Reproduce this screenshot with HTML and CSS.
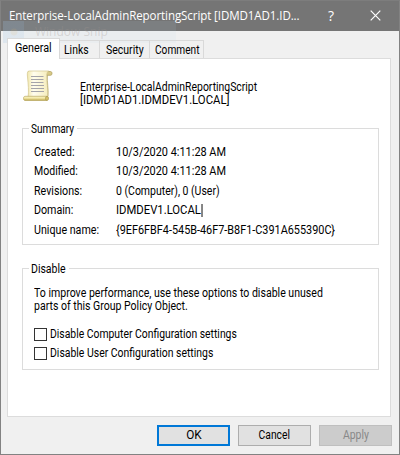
FILE: index.html
```html
<!DOCTYPE html>
<html lang="en">
<head>
<meta charset="utf-8">
<title>Group Policy Object Properties</title>
<link rel="stylesheet" href="styles.css">
</head>
<body>
<main class="window">
  <header class="titlebar">
    <h1 class="title">Enterprise-LocalAdminReportingScript [IDMD1AD1.ID...</h1>
    <span class="help">?</span>
    <svg class="close" width="11" height="11" viewBox="0 0 11 11"><path d="M.7.7l9.6 9.6M10.3.7L.7 10.3" fill="none" stroke="#fff" stroke-width="1.2"/></svg>
  </header>
  <div class="ghost"><span class="ghost-icon"></span><span class="ghost-text">Window Snip</span></div>
  <nav class="tabs">
    <span class="tab active"><span class="t-general">General</span></span>
    <span class="tab links"><span class="t-links">Links</span></span>
    <span class="tab security"><span class="t-security">Security</span></span>
    <span class="tab comment"><span class="t-comment">Comment</span></span>
  </nav>
  <section class="panel">
    <div class="object">
      <svg class="scroll" width="31" height="32" viewBox="0 0 31 32">
        <defs>
          <linearGradient id="paper" x1="0" y1="0" x2="1" y2="0"><stop offset="0" stop-color="#f1e7ac"/><stop offset=".3" stop-color="#fffdee"/><stop offset="1" stop-color="#f5ecbb"/></linearGradient>
          <linearGradient id="roll" x1="0" y1="0" x2="0" y2="1"><stop offset="0" stop-color="#fffbd0"/><stop offset=".5" stop-color="#eee19a"/><stop offset="1" stop-color="#b9a44f"/></linearGradient>
        </defs>
        <path d="M5 1.5h22.5c2 0 2 3.8 0 3.8H25z" fill="#d8c987" stroke="#a99a57" stroke-width=".7"/>
        <path d="M5.5 1h20c-1.6 1-1.8 3-1.8 6 0 7 1.800 13 1 21H5c1-7 .2-14-.5-21-.3-3-.4-5 1-6z" fill="url(#paper)" stroke="#d2c58c" stroke-width=".7"/>
        <path d="M24.500 5c-.7 7 1.200 14 .5 21" fill="none" stroke="#b4a668" stroke-width=".7"/>
        <path d="M8 6.500h12.500M8 9.500h12.500M8 12.500h12.500M8 15.500h13M8 18.500h13M8 21.500h13" stroke="#a5a4a9"/>
        <path d="M2 26.300h21.500c1.800 0 1.800 4.200 0 4.200H2c-2 0-2-4.200 0-4.200z" fill="url(#roll)" stroke="#b7a75f" stroke-width=".7"/>
        <ellipse cx="24" cy="28.400" rx="1.500" ry="2.100" fill="#d5c16a" stroke="#a39145" stroke-width=".6"/>
      </svg>
      <div class="object-name"><span class="n1">Enterprise-LocalAdminReportingScript</span><span class="n2">[IDMD1AD1.IDMDEV1.LOCAL]</span></div>
    </div>
    <section class="group summary">
      <h2 class="legend"><span class="t-summary">Summary</span></h2>
      <dl class="facts">
        <dt class="k1">Created:</dt><dd class="v1">10/3/2020 4:11:28 AM</dd>
        <dt class="k2">Modified:</dt><dd class="v1">10/3/2020 4:11:28 AM</dd>
        <dt class="k3">Revisions:</dt><dd class="v3">0 (Computer), 0 (User)</dd>
        <dt class="k4">Domain:</dt><dd class="v4"><span>IDMDEV1.LOCAL</span><i class="caret"></i></dd>
        <dt class="k5">Unique name:</dt><dd class="v5">{9EF6FBF4-545B-46F7-B8F1-C391A655390C}</dd>
      </dl>
    </section>
    <section class="group disable">
      <h2 class="legend legend-disable"><span class="t-disable">Disable</span></h2>
      <p class="hint"><span class="h1">To improve performance, use these options to disable unused</span><span class="h2">parts of this Group Policy Object.</span></p>
      <div class="check"><i class="box"></i><span class="c1">Disable Computer Configuration settings</span></div>
      <div class="check"><i class="box"></i><span class="c2">Disable User Configuration settings</span></div>
    </section>
  </section>
  <footer class="buttons">
    <span class="button default"><span class="t-ok">OK</span></span>
    <span class="button"><span class="t-cancel">Cancel</span></span>
    <span class="button disabled"><span class="t-apply">Apply</span></span>
  </footer>
</main>
</body>
</html>
```
FILE: styles.css
```css
* { box-sizing: border-box; margin: 0; padding: 0; }
body { width: 400px; height: 455px; overflow: hidden; font: 12px/13px Roboto, "Liberation Sans", sans-serif; color: #000; }
h1, h2 { font: inherit; }
.window { position: relative; display: flex; flex-direction: column; width: 400px; height: 455px; border: 1px solid #828282; border-top-color: #7d7d7d; background: #f0f0f0; }
.titlebar { display: flex; align-items: center; flex: none; height: 30px; padding-left: 8px; background: #757575; color: #fff; white-space: nowrap; }
.title { width: 319px; font: 12px/16px "Open Sans", sans-serif; letter-spacing: -.1px; transform: scaleX(.963); transform-origin: left; }
.help { width: 42px; font: 14px/16px "Open Sans", sans-serif; }
.close { display: block; margin-top: -1px; }
.ghost { position: absolute; left: 2px; top: 20px; width: 173px; height: 22px; display: flex; align-items: center; background: rgba(190, 220, 240, .1); }
.ghost-icon { width: 21px; height: 22px; margin-right: 11px; background: radial-gradient(circle at 11px 11px, rgba(190, 185, 165, .25) 3px, rgba(150, 190, 230, .15) 4px); }
.ghost-text { font: 12px/16px "Open Sans", sans-serif; color: rgba(160, 150, 145, .3); }
.tabs { position: relative; z-index: 1; display: flex; align-items: flex-end; flex: none; height: 28px; margin: -1px 0 0 6px; }
.tab { height: 18px; padding-top: 3px; border-top: 1px solid #d9d9d9; border-right: 1px solid #d9d9d9; white-space: nowrap; }
.tab.active { width: 53px; height: 21px; margin-bottom: -1px; padding: 3px 0 0 7px; border-left: 1px solid #d9d9d9; background: #fff; }
.links { width: 40px; padding-left: 4px; }
.security { width: 50px; padding-left: 6px; }
.comment { width: 54px; padding-left: 5px; }
.panel { flex: none; width: 384px; height: 359px; margin-left: 6px; padding: 11px 11px 0 14px; border: 1px solid #dcdcdc; background: #fff; }
.object { display: flex; height: 58px; }
.scroll { display: block; margin: 0 0 0 1px; }
.object-name { display: flex; flex-direction: column; margin: 11px 0 0 25.500px; white-space: nowrap; }
.group { position: relative; width: 357px; border: 1px solid #dcdcdc; }
.summary { height: 117px; }
.disable { height: 102px; margin-top: 23px; }
.legend { position: absolute; left: 6px; top: -6px; width: 48px; height: 13px; padding-left: 2px; background: #fff; }
.legend-disable { width: 40px; }
.facts { display: grid; grid-template-columns: 82px 1fr; grid-template-rows: 19px 20px 19px 20px 19px; padding: 17px 0 0 11px; white-space: nowrap; }
.v4 { display: flex; }
.caret { width: 1px; height: 13px; margin-left: 1px; background: #000; }
.hint { display: flex; flex-direction: column; margin: 18px 0 0 11px; white-space: nowrap; }
.check { display: flex; align-items: center; height: 13px; margin: 6px 0 0 11px; white-space: nowrap; }
.hint + .check { margin-top: 15px; }
.box { width: 13px; height: 13px; margin-right: 3px; border: 1px solid #333; background: #fff; }
.buttons { display: flex; gap: 8px; margin: 8px 0 0 156px; }
.button { width: 73px; height: 21px; padding-top: 3px; border: 1px solid #adadad; background: #e1e1e1; text-align: center; }
.default { padding-top: 2px; border: 2px solid #0078d7; }
.disabled { border-color: #bfbfbf; background: #ccc; color: #888; }

/* Condensed dialog lettering */
.tab span, .object-name span, .legend span, .facts dt, .facts dd, .hint span, .check span, .button span { display: inline-block; transform: scaleX(var(--w, 1)); transform-origin: left; }
.facts .v4 { display: flex; }
.button span { transform-origin: center; }
.t-general { --w: .9; }
.t-links { --w: .87; }
.t-security { --w: .875; }
.t-comment { --w: .845; }
.n1 { --w: .868; }
.n2 { --w: .943; }
.t-summary { --w: .84; }
.t-disable { --w: .875; }
.k1 { --w: .91; }
.k2 { --w: .88; }
.k3 { --w: .89; }
.k4 { --w: .89; }
.k5 { --w: .89; }
.v1 { --w: .91; }
.v3 { --w: .873; }
.v4 { --w: .94; }
.facts .v4 span { transform: none; }
.v5 { --w: .905; }
.h1 { --w: .88; }
.h2 { --w: .877; }
.c1 { --w: .864; }
.c2 { --w: .87; }
.t-ok { --w: .98; }
.t-cancel { --w: .86; }
.t-apply { --w: .87; }
```
